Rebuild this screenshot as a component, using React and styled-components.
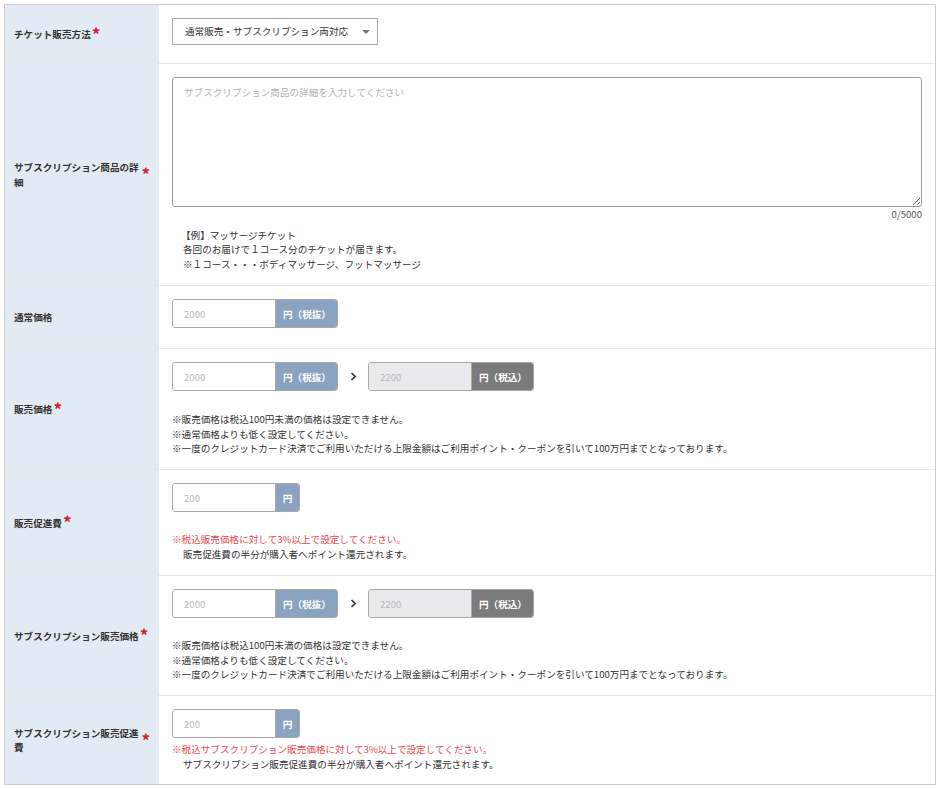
import styled, { createGlobalStyle } from 'styled-components';

const GlobalStyle = createGlobalStyle`
  html, body {
    margin: 0;
    padding: 0;
    background: #fff;
  }
  body {
    padding: 4px;
    font-family: "Noto Sans CJK JP", "Noto Sans", sans-serif;
    color: #333;
  }
  * {
    box-sizing: border-box;
  }
`;

const Table = styled.div`
  width: 932px;
  border: 1px solid #cdcdcd;
  background: #fff;
`;

const Row = styled.div`
  display: grid;
  grid-template-columns: 154px 1fr;
  border-bottom: 1px solid #e8e8e8;
  &:last-child {
    border-bottom: none;
  }
`;

const Label = styled.div`
  display: flex;
  align-items: center;
  padding: 0 9px;
  background: #e2ebf4;
  font-size: 9.6px;
  font-weight: 700;
  line-height: 1.5;
  color: #333;
`;

const LabelText = styled.span`
  min-width: 0;
`;

const Req = styled.span`
  flex: none;
  margin-left: 1px;
  margin-top: -2px;
  color: #d3202a;
  font-size: 17px;
  line-height: 1;
  font-weight: 700;
`;

const Cell = styled.div`
  padding: 13px 13px ${(p) => p.$bottom || 14}px;
  font-size: 9.6px;
  line-height: 1.5;
`;

const Select = styled.div`
  width: 206px;
  height: 27px;
  margin-bottom: 4px;
  display: flex;
  align-items: center;
  justify-content: space-between;
  padding: 0 7px 0 12px;
  border: 1px solid #a9a9a9;
  background: #fff;
  font-size: 9.6px;
  color: #333;
`;

const Caret = styled.span`
  width: 0;
  height: 0;
  border-left: 4px solid transparent;
  border-right: 4px solid transparent;
  border-top: 4px solid #777;
`;

const TextArea = styled.textarea`
  display: block;
  width: 100%;
  height: 130px;
  padding: 7px 11px;
  border: 1px solid #9a9a9a;
  border-radius: 3px;
  font-family: inherit;
  font-size: 9.6px;
  line-height: 1.5;
  color: #333;
  &::placeholder {
    color: #b3b3b3;
  }
`;

const Counter = styled.div`
  text-align: right;
  color: #555;
  font-size: 9.6px;
  line-height: 14px;
`;

const Fields = styled.div`
  display: flex;
  align-items: center;
  margin-bottom: ${(p) => p.$after || 0}px;
`;

const Group = styled.div`
  display: flex;
  height: 29px;
  border: 1px solid #a8a8a8;
  border-radius: 3px;
  overflow: hidden;
`;

const Input = styled.input`
  width: 102px;
  height: 100%;
  border: none;
  outline: none;
  padding: 0 11px;
  background: ${(p) => (p.$disabled ? '#e9eaec' : '#fff')};
  font-family: inherit;
  font-size: 9.6px;
  &::placeholder {
    color: #b8b8b8;
  }
`;

const Addon = styled.div`
  display: flex;
  align-items: center;
  justify-content: ${(p) => (p.$narrow ? 'center' : 'flex-start')};
  width: ${(p) => (p.$narrow ? 24 : 62)}px;
  padding-left: ${(p) => (p.$narrow ? 0 : 7)}px;
  border-left: 1px solid #a8a8a8;
  background: ${(p) => (p.$dark ? '#7b7b7b' : '#8aa3c1')};
  color: #fff;
  font-size: 9.6px;
  font-weight: 700;
  white-space: nowrap;
`;

const Arrow = styled.div`
  width: 30px;
  display: flex;
  justify-content: center;
  color: #333;
`;

const Notes = styled.div`
  margin-top: ${(p) => p.$gap || 0}px;
  padding-left: ${(p) => p.$indent || 0}px;
  font-size: 9.6px;
  line-height: 14.4px;
  color: #333;
`;

const Line = styled.div`
  color: ${(p) => (p.$red ? '#e8484c' : '#333')};
  padding-left: ${(p) => p.$indent || 0}px;
`;

const Chevron = () => (
  <svg width="7" height="9" viewBox="0 0 7 9">
    <polyline points="1.5,1 5.2,4.5 1.5,8" fill="none" stroke="#333" strokeWidth="1.7" />
  </svg>
);

const PriceGroup = ({ value, unit, dark, narrow, disabled }) => (
  <Group>
    <Input placeholder={value} readOnly $disabled={disabled} />
    <Addon $dark={dark} $narrow={narrow}>{unit}</Addon>
  </Group>
);

const FormLabel = ({ children, required }) => (
  <Label>
    <LabelText>{children}</LabelText>
    {required && <Req>*</Req>}
  </Label>
);

const priceNotes = [
  '※販売価格は税込100円未満の価格は設定できません。',
  '※通常価格よりも低く設定してください。',
  '※一度のクレジットカード決済でご利用いただける上限金額はご利用ポイント・クーポンを引いて100万円までとなっております。',
];

const TaxPair = () => (
  <Fields>
    <PriceGroup value="2000" unit="円（税抜）" />
    <Arrow>
      <Chevron />
    </Arrow>
    <PriceGroup value="2200" unit="円（税込）" dark disabled />
  </Fields>
);

const App = () => {
  return (
    <>
      <GlobalStyle />
      <Table>
        <Row>
          <FormLabel required>チケット販売方法</FormLabel>
          <Cell>
            <Select>
              <span>通常販売・サブスクリプション両対応</span>
              <Caret />
            </Select>
          </Cell>
        </Row>

        <Row>
          <FormLabel required>サブスクリプション商品の詳細</FormLabel>
          <Cell>
            <TextArea placeholder="サブスクリプション商品の詳細を入力してください" />
            <Counter>0/5000</Counter>
            <Notes $gap={7} $indent={9}>
              <Line>【例】マッサージチケット</Line>
              <Line $indent={2}>各回のお届けで１コース分のチケットが届きます。</Line>
              <Line $indent={2}>※１コース・・・ボディマッサージ、フットマッサージ</Line>
            </Notes>
          </Cell>
        </Row>

        <Row>
          <FormLabel>通常価格</FormLabel>
          <Cell>
            <Fields $after={6}>
              <PriceGroup value="2000" unit="円（税抜）" />
            </Fields>
          </Cell>
        </Row>

        <Row>
          <FormLabel required>販売価格</FormLabel>
          <Cell>
            <TaxPair />
            <Notes $gap={21}>
              {priceNotes.map((n) => (
                <Line key={n}>{n}</Line>
              ))}
            </Notes>
          </Cell>
        </Row>

        <Row>
          <FormLabel required>販売促進費</FormLabel>
          <Cell>
            <Fields>
              <PriceGroup value="200" unit="円" narrow />
            </Fields>
            <Notes $gap={20}>
              <Line $red>※税込販売価格に対して3%以上で設定してください。</Line>
              <Line $indent={11}>販売促進費の半分が購入者へポイント還元されます。</Line>
            </Notes>
          </Cell>
        </Row>

        <Row>
          <FormLabel required>サブスクリプション販売価格</FormLabel>
          <Cell>
            <TaxPair />
            <Notes $gap={20}>
              {priceNotes.map((n) => (
                <Line key={n}>{n}</Line>
              ))}
            </Notes>
          </Cell>
        </Row>

        <Row>
          <FormLabel required>サブスクリプション販売促進費</FormLabel>
          <Cell $bottom={13}>
            <Fields>
              <PriceGroup value="200" unit="円" narrow />
            </Fields>
            <Notes $gap={4}>
              <Line $red>※税込サブスクリプション販売価格に対して3%以上で設定してください。</Line>
              <Line $indent={11}>サブスクリプション販売促進費の半分が購入者へポイント還元されます。</Line>
            </Notes>
          </Cell>
        </Row>
      </Table>
    </>
  );
};

export default App;
